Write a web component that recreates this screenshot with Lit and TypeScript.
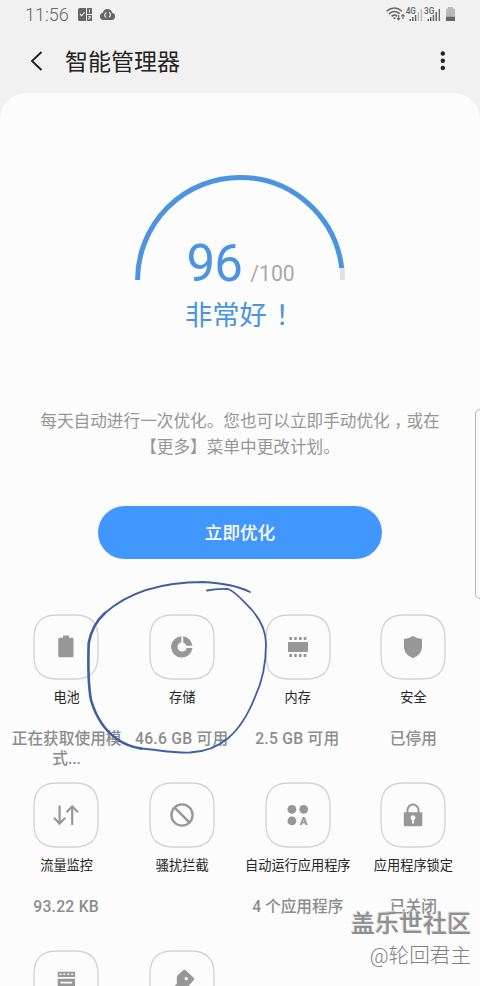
import { LitElement, html, css, svg, nothing } from "lit";
import { customElement } from "lit/decorators.js";

const glyphs: Record<string, unknown> = {
  battery: svg`<path d="M13 4.500h6v2.200h3.100q1.400 0 1.400 1.400v16.800q0 1.400-1.400 1.400h-12.400q-1.400 0-1.400-1.400V8.100q0-1.400 1.400-1.400H13z"/>`,
  storage: svg`<path d="M15.300 5.200A10.700 10.700 0 1 0 26.400 17H20.600A4.600 4.600 0 1 1 15.300 11.400Z"/><path d="M17.200 5.200A10.700 10.700 0 0 1 26.400 14.800H20.400A4.600 4.600 0 0 0 17.200 11.500Z"/>`,
  memory: svg`<path d="M6 11h20v10H6zM7.300 6h2.700v3H7.300zM12.100 6h2.700v3h-2.700zM16.900 6h2.700v3h-2.700zM21.700 6h2.700v3h-2.700zM7.300 23h2.700v3H7.300zM12.100 23h2.700v3h-2.700zM16.900 23h2.700v3h-2.700zM21.700 23h2.700v3h-2.700z"/>`,
  security: svg`<path d="M16 5Q19.500 7.400 25 8V15.500C25 21.500 21 25.200 16 27.200C11 25.200 7 21.500 7 15.500V8Q12.500 7.400 16 5Z"/>`,
  data: svg`<path d="M9.600 6.500v18M4 18.800l5.600 5.800 5.600-5.800M22.200 26V7M16.500 13.200l5.700-5.900 5.700 5.900" fill="none" stroke="currentColor" stroke-width="2.200"/>`,
  block: svg`<circle cx="16" cy="16" r="10.600" fill="none" stroke="currentColor" stroke-width="2.400"/><path d="M8.600 8.600l14.800 14.800" stroke="currentColor" stroke-width="2.400"/>`,
  apps: svg`<circle cx="9.900" cy="10.300" r="4.400"/><circle cx="21.700" cy="10.300" r="4.400"/><circle cx="9.900" cy="21.900" r="4.400"/><text x="21.700" y="26" text-anchor="middle" font-family="Roboto, sans-serif" font-weight="900" font-size="11.500">A</text>`,
  lock: svg`<path d="M10.500 14v-2.700a5.500 5.800 0 0 1 11 0V14" fill="none" stroke="currentColor" stroke-width="2"/><path fill-rule="evenodd" d="M7.800 13.200h16.700q.8 0 .8.800v12q0 1.200-1.200 1.200H8q-1.200 0-1.200-1.200V14q0-.8 1-.8zM16 16.300a2.400 2.400 0 0 0-1 4.600v3.500h2v-3.500a2.400 2.400 0 0 0-1-4.600z"/>`,
  archive: svg`<path fill-rule="evenodd" d="M7.700 4.700h17.300v5.300H7.700zM9.500 6.400v1.700h2V6.400zM13.300 6.400v1.700h2V6.400zM17.300 6.400v1.700h2V6.400zM21.200 6.400v1.700h2V6.400zM7.700 11.800h17.300V27H7.700zM10.500 14.700v1.700h11.700v-1.700z"/>`,
  cleaner: svg`<path fill-rule="evenodd" d="M17 3.500Q18.500 2.200 20 3.500L27.600 10.800Q28.800 12 27.600 13.200L22 19.500 13 21.500 7 25V20L10.800 17V10.700Q10.600 8.600 12.400 7.400ZM20.200 10a1.600 1.600 0 1 0 .1 0z"/>`,
};

interface Tile {
  icon: string;
  name: string;
  status?: string;
  amount?: boolean;
}

const tiles: Tile[] = [
  { icon: "battery", name: "电池", status: "正在获取使用模式..." },
  { icon: "storage", name: "存储", status: "46.6 GB 可用", amount: true },
  { icon: "memory", name: "内存", status: "2.5 GB 可用", amount: true },
  { icon: "security", name: "安全", status: "已停用" },
  { icon: "data", name: "流量监控", status: "93.22 KB", amount: true },
  { icon: "block", name: "骚扰拦截" },
  { icon: "apps", name: "自动运行应用程序", status: "4 个应用程序" },
  { icon: "lock", name: "应用程序锁定", status: "已关闭" },
  { icon: "archive", name: "" },
  { icon: "cleaner", name: "" },
];

@customElement("status-bar")
class StatusBar extends LitElement {
  static styles = css`
    :host {
      display: flex;
      justify-content: space-between;
      height: 29px;
      padding: 0 24px 0 25px;
      color: #666;
    }
    .side {
      display: flex;
      align-items: center;
      height: 30px;
    }
    .time {
      width: 52px;
      font-size: 18px;
      font-weight: 300;
      line-height: 30px;
      white-space: nowrap;
    }
    svg {
      display: block;
      fill: currentColor;
    }
  `;

  render() {
    return html`
      <div class="side">
        <span class="time">11:56</span>
        <svg width="40" height="30" viewBox="77 0 40 30">
          <path d="M79.500 8h6.500v13h-6.500q-1.500 0-1.500-1.500v-10q0-1.500 1.500-1.500zM87 8h5v6h-5zM87 15h5v6h-5z" />
          <path d="M80 14l1.600 1.700 3-3.400" fill="none" stroke="#f1f1f1" stroke-width="1.200" />
          <path d="M89.500 9.500v3M88.300 16.500h2v1.500h-1.500v1.500" fill="none" stroke="#f1f1f1" />
          <path d="M103.300 20a3.700 3.700 0 0 1-.4-7.300 4.700 4.700 0 0 1 9.200 0 3.700 3.700 0 0 1-.3 7.300z" />
          <path d="M106.300 17.500a2.800 2.800 0 0 1 .1-5M108.900 12.300a2.800 2.800 0 0 1 0 5" fill="none" stroke="#f1f1f1" stroke-width="1.200" />
        </svg>
      </div>
      <div class="side">
        <svg width="70" height="30" viewBox="386 0 70 30">
          <g fill="none" stroke="currentColor" stroke-width="1.500">
            <path d="M386.500 11.200Q394.500 4.800 402 11.200M389 13.800Q394.500 9.300 399.700 13.600M391.600 16.400Q394.500 13.900 397.200 16.300" />
            <path d="M398.600 14.700v5M397 18l1.600 1.800 1.600-1.800M403 19v-4.500M401.400 16.300l1.600-1.800 1.600 1.800" stroke-width="1.100" />
          </g>
          <circle cx="394.500" cy="18.300" r="1" />
          <text x="405.700" y="14" font-size="8.200" font-weight="500">4G</text>
          <text x="424" y="14" font-size="8.200" font-weight="500">3G</text>
          <path d="M409.500 19h1.500v2h-1.500zM412 17h1.500v4h-1.500zM414.800 15h1.500v6h-1.500zM427.500 19h1.500v2h-1.500zM430 17h1.500v4h-1.500zM432.700 15h1.500v6h-1.500zM435.500 12h1.500v9h-1.500zM438.700 9h1.300v12h-1.300z" />
          <path d="M417.700 12h1.300v9h-1.300zM420.700 9h1.300v12h-1.300z" fill="#b9b9b9" />
          <path d="M448 7h5v1.700h2V21h-9V8.700h2z" fill="#b9b9b9" />
          <path d="M446 16.800h9V21h-9z" />
        </svg>
      </div>
    `;
  }
}

@customElement("score-gauge")
class ScoreGauge extends LitElement {
  static styles = css`
    :host {
      display: flex;
      flex-direction: column;
      align-items: center;
      color: #4a94e1;
    }
    .dial {
      display: grid;
      width: 210px;
      height: 106px;
    }
    .arc,
    .score {
      grid-area: 1 / 1;
    }
    .arc {
      display: block;
      overflow: visible;
      fill: none;
      stroke-width: 5px;
    }
    .track {
      stroke: #e2e2e2;
    }
    .value {
      stroke: currentColor;
      stroke-dasharray: 173.200 180;
    }
    .score {
      display: flex;
      align-items: baseline;
      align-self: end;
      padding-left: 51.500px;
      gap: 8px;
      line-height: 34px;
      height: 34px;
      white-space: nowrap;
    }
    .points {
      font-size: 51px;
      letter-spacing: -0.800px;
    }
    .total {
      font-size: 21.200px;
      color: #a9a9a9;
    }
    .verdict {
      display: flex;
      width: 110px;
      height: 36px;
      margin-top: 14px;
      font-family: "Noto Sans CJK SC", sans-serif;
      font-size: 27.300px;
      line-height: 36px;
      white-space: nowrap;
    }
    .mark {
      margin-left: 1.500px;
      font-family: "Noto Sans CJK TC", sans-serif;
    }
  `;

  render() {
    return html`
      <div class="dial">
        <svg class="arc" width="210" height="106" viewBox="135 175 210 106">
          <path class="track" d="M342.400 280V267" />
          <path class="value" pathLength="180" d="M137.600 280A102.400 102.600 0 0 1 342.400 280" />
        </svg>
        <div class="score"><span class="points">96</span><span class="total">/100</span></div>
      </div>
      <div class="verdict"><span>非常好</span><span class="mark" lang="zh-TW">！</span></div>
    `;
  }
}

@customElement("feature-tile")
class FeatureTile extends LitElement {
  static properties = { tile: { attribute: false } };
  declare tile: Tile;

  static styles = css`
    :host {
      display: flex;
      flex-direction: column;
      align-items: center;
      height: 168px;
      text-align: center;
    }
    .frame {
      display: block;
      flex: none;
      margin-right: 0.600px;
      fill: #979797;
      color: #979797;
    }
    .border {
      fill: none;
      stroke: #d2d2d2;
      stroke-width: 1.300px;
    }
    .name {
      height: 20px;
      margin-top: 8px;
      font-size: 13.200px;
      line-height: 20px;
      color: #252525;
      white-space: nowrap;
    }
    .status {
      width: 112px;
      margin-top: 21px;
      font-size: 15.700px;
      font-weight: 500;
      line-height: 19.500px;
      color: #8c8c8c;
      word-break: break-all;
    }
    .amount {
      letter-spacing: 0.250px;
      margin-right: 1px;
    }
  `;

  render() {
    const { icon, name, status, amount } = this.tile;
    return html`
      <svg class="frame" width="66" height="66" viewBox="0 0 66 66">
        <path class="border" d="M1 24C1 8.500 8.500 1 24 1H42C57.500 1 65 8.500 65 24V42C65 57.500 57.500 65 42 65H24C8.500 65 1 57.500 1 42Z" />
        <g transform="translate(17 17)">${glyphs[icon]}</g>
      </svg>
      <div class="name">${name}</div>
      ${status ? html`<div class="status ${amount ? "amount" : ""}">${status}</div>` : nothing}
    `;
  }
}

@customElement("app-root")
class AppRoot extends LitElement {
  static styles = css`
    :host {
      display: block;
      position: relative;
      width: 480px;
      height: 986px;
      overflow: hidden;
      background: #f1f1f1;
      font-family: Roboto, "Noto Sans CJK SC", sans-serif;
    }
    .header {
      display: flex;
      align-items: center;
      height: 64px;
      padding: 0 30px;
      color: #222;
    }
    .header svg {
      display: block;
    }
    .title {
      flex: 1;
      margin: 0 0 0 21px;
      padding-top: 4px;
      font-size: 23px;
      font-weight: 400;
      line-height: 34px;
    }
    .panel {
      height: 893px;
      padding-top: 82px;
      box-sizing: border-box;
      border-radius: 26px 26px 0 0;
      background: #fcfcfc;
    }
    .note {
      width: 402px;
      margin: 78px auto 0;
      font-size: 16.650px;
      line-height: 26px;
      text-align: center;
      color: #969696;
      white-space: nowrap;
    }
    .comma {
      display: inline-block;
      height: 16px;
      padding-top: 3px;
      font-family: "Noto Sans CJK TC", sans-serif;
      line-height: 16px;
      vertical-align: -5px;
    }
    .optimize {
      display: block;
      width: 284px;
      height: 53px;
      margin: 45px auto 0;
      padding: 1px 0 0;
      box-sizing: border-box;
      border: 0;
      border-radius: 27px;
      background: #4297ff;
      color: #fff;
      font: 500 17.600px/52px Roboto, "Noto Sans CJK SC", sans-serif;
    }
    .features {
      display: grid;
      grid-template-columns: repeat(4, 115.600px);
      justify-content: center;
      margin-top: 55px;
    }
    .ink {
      position: absolute;
      left: 0;
      top: 570px;
      fill: none;
      stroke: #3e5fa0;
      stroke-linecap: round;
    }
    .edge {
      position: absolute;
      left: 475px;
      top: 409px;
      width: 12px;
      height: 188px;
      border: 1px solid #b5b5b5;
      border-radius: 5px;
    }
    .stamp {
      position: absolute;
      right: 9px;
      top: 907px;
      text-align: right;
      color: #8f8f8f;
      white-space: nowrap;
    }
    .forum {
      font-size: 24px;
      font-weight: 500;
      line-height: 34px;
      text-shadow: -1px -1px 0 #d6d6d6;
    }
    .author {
      font-size: 20.600px;
      font-weight: 300;
      line-height: 30px;
      color: #808080;
    }
  `;

  render() {
    return html`
      <status-bar></status-bar>
      <div class="header">
        <svg width="14" height="22" viewBox="0 0 14 22" fill="none" stroke="currentColor" stroke-width="1.900">
          <path d="M11.500 2L2 11l9.500 9" />
        </svg>
        <h1 class="title">智能管理器</h1>
        <svg width="14" height="22" viewBox="0 0 14 22" fill="currentColor">
          <circle cx="6.800" cy="3.500" r="2.200" />
          <circle cx="6.800" cy="10.700" r="2.200" />
          <circle cx="6.800" cy="17.900" r="2.200" />
        </svg>
      </div>
      <main class="panel">
        <score-gauge></score-gauge>
        <div class="note">每天自动进行一次优化。您也可以立即手动优化<span class="comma" lang="zh-TW">，</span>或在<br />【更多】菜单中更改计划。</div>
        <button class="optimize">立即优化</button>
        <div class="features">${tiles.map((t) => html`<feature-tile .tile=${t}></feature-tile>`)}</div>
      </main>
      <svg class="ink" width="280" height="190" viewBox="0 570 280 190">
        <path stroke-width="1.800" d="M105 613C130 591 164 582 203 582C222 583 240 587 250 592" />
        <path stroke-width="1.800" d="M207 590.500C214 589 221 588.500 228 589C235 591 243 601 251 609C260 619 266 630 266 644C266 664 263 680 255 697C240 735 219 751 190 752.500C171 753 160 750 140 748.500" />
        <path stroke-width="2.600" d="M105 613C97 620 91 631 88.700 643C88 664 88 684 91 700C96 717 104 730 117 739C124 744 130 747 141 748.500" />
      </svg>
      <div class="edge"></div>
      <div class="stamp">
        <div class="forum">盖乐世社区</div>
        <div class="author">@轮回君主</div>
      </div>
    `;
  }
}
